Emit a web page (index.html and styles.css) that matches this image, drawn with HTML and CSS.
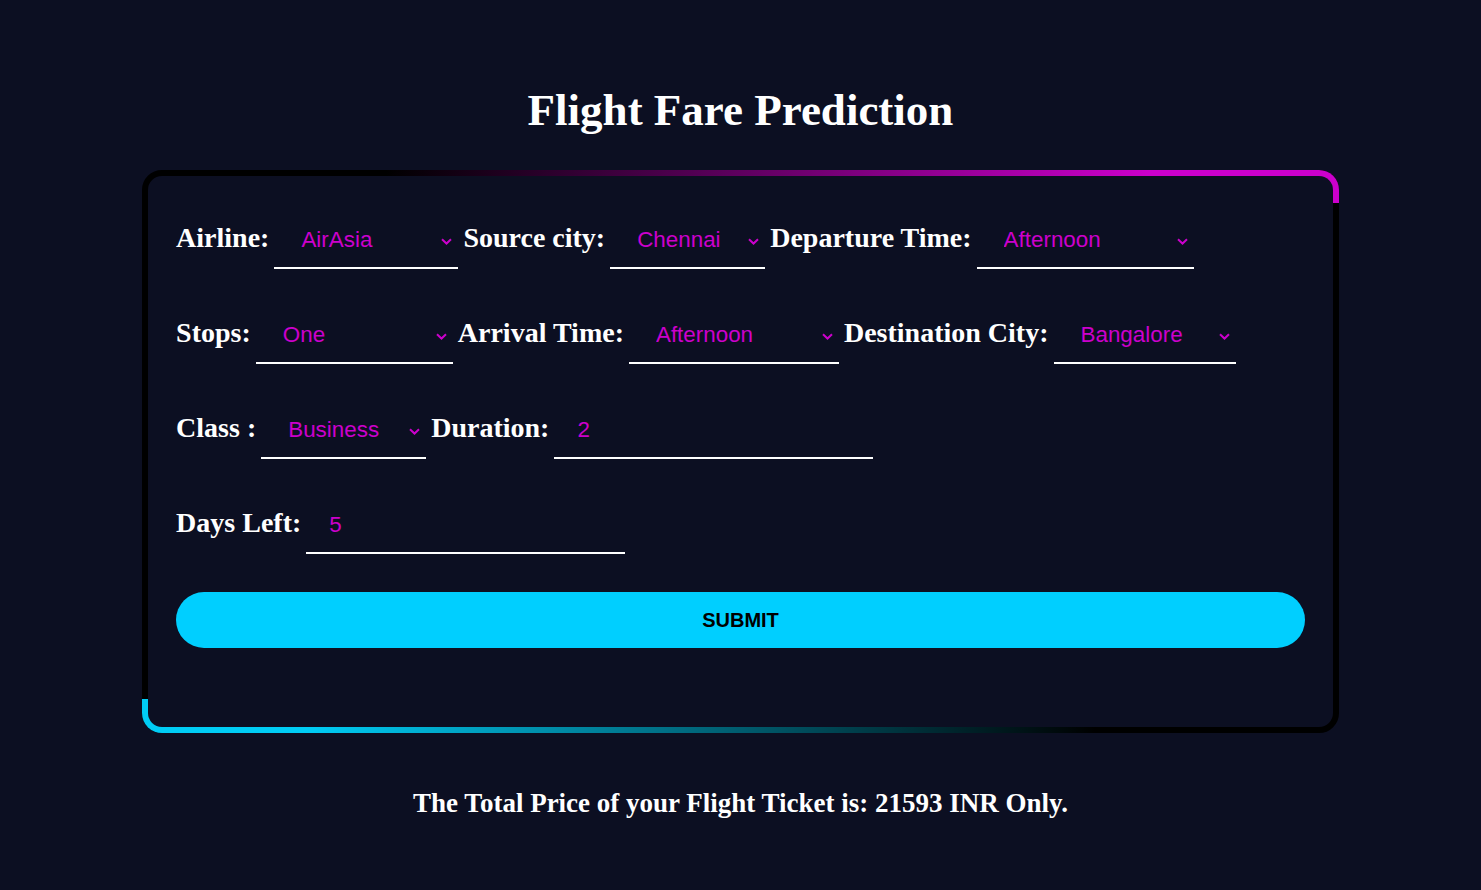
FILE: index.html
```html
<!DOCTYPE html>
<html lang="en">
<head>
<meta charset="utf-8">
<title>Flight Fare Prediction</title>
<link rel="stylesheet" href="styles.css">
</head>
<body>
<main class="page">
  <h1 class="title">Flight Fare Prediction</h1>
  <form class="card">
    <div class="row">
      <label class="label">Airline:</label>
      <div class="field w-184">
        <select class="control"><option>AirAsia</option><option>Vistara</option></select>
        <svg class="chev" width="11" height="7" viewBox="0 0 11 7"><path d="M1 1.2 L5.5 5.5 L10 1.2" fill="none" stroke="#cc00cc" stroke-width="2"/></svg>
      </div>
      <label class="label">Source city:</label>
      <div class="field w-155">
        <select class="control"><option>Chennai</option><option>Delhi</option></select>
        <svg class="chev" width="11" height="7" viewBox="0 0 11 7"><path d="M1 1.2 L5.5 5.5 L10 1.2" fill="none" stroke="#cc00cc" stroke-width="2"/></svg>
      </div>
      <label class="label">Departure Time:</label>
      <div class="field w-217">
        <select class="control"><option>Afternoon</option><option>Morning</option></select>
        <svg class="chev" width="11" height="7" viewBox="0 0 11 7"><path d="M1 1.2 L5.5 5.5 L10 1.2" fill="none" stroke="#cc00cc" stroke-width="2"/></svg>
      </div>
    </div>
    <div class="row">
      <label class="label">Stops:</label>
      <div class="field w-197">
        <select class="control"><option>One</option><option>Zero</option></select>
        <svg class="chev" width="11" height="7" viewBox="0 0 11 7"><path d="M1 1.2 L5.5 5.5 L10 1.2" fill="none" stroke="#cc00cc" stroke-width="2"/></svg>
      </div>
      <label class="label">Arrival Time:</label>
      <div class="field w-210">
        <select class="control"><option>Afternoon</option><option>Night</option></select>
        <svg class="chev" width="11" height="7" viewBox="0 0 11 7"><path d="M1 1.2 L5.5 5.5 L10 1.2" fill="none" stroke="#cc00cc" stroke-width="2"/></svg>
      </div>
      <label class="label">Destination City:</label>
      <div class="field w-182">
        <select class="control"><option>Bangalore</option><option>Mumbai</option></select>
        <svg class="chev" width="11" height="7" viewBox="0 0 11 7"><path d="M1 1.2 L5.5 5.5 L10 1.2" fill="none" stroke="#cc00cc" stroke-width="2"/></svg>
      </div>
    </div>
    <div class="row">
      <label class="label">Class :</label>
      <div class="field w-165">
        <select class="control"><option>Business</option><option>Economy</option></select>
        <svg class="chev" width="11" height="7" viewBox="0 0 11 7"><path d="M1 1.2 L5.5 5.5 L10 1.2" fill="none" stroke="#cc00cc" stroke-width="2"/></svg>
      </div>
      <label class="label">Duration:</label>
      <div class="field field-input w-319">
        <input class="control text" type="text" value="2">
      </div>
    </div>
    <div class="row">
      <label class="label">Days Left:</label>
      <div class="field field-input w-319">
        <input class="control text" type="text" value="5">
      </div>
    </div>
    <button class="submit" type="button">SUBMIT</button>
  </form>
  <h3 class="result">The Total Price of your Flight Ticket is: 21593 INR Only.</h3>
</main>
</body>
</html>
```

FILE: styles.css
```css
html, body {
  margin: 0;
  padding: 0;
  background: #0c0f22;
}

.page {
  display: flex;
  flex-direction: column;
  align-items: center;
  padding-top: 84px;
  font-family: "Liberation Serif", "Times New Roman", serif;
  color: #fff;
}

.title {
  margin: 0 0 34px;
  font-size: 45px;
  line-height: 52px;
  font-weight: bold;
}

.card {
  position: relative;
  box-sizing: border-box;
  width: calc(80% + 12px);
  border: 6px solid #000;
  border-radius: 20px;
  padding: 43px 28px 79px 28px;
  display: flex;
  flex-direction: column;
  gap: 45px;
}

.card::before,
.card::after {
  content: "";
  position: absolute;
  pointer-events: none;
  border: 0 solid transparent;
}

.card::before {
  top: -6px;
  left: 14px;
  right: -6px;
  height: 27px;
  border-top-width: 6px;
  border-right-width: 6px;
  border-radius: 0 20px 0 0;
  background:
    linear-gradient(#0c0f22, #0c0f22) padding-box,
    linear-gradient(90deg, #000 19%, #cc00cc 84%) border-box;
}

.card::after {
  bottom: -6px;
  left: -6px;
  right: 14px;
  height: 28px;
  border-bottom-width: 6px;
  border-left-width: 6px;
  border-radius: 0 0 0 20px;
  background:
    linear-gradient(#0c0f22, #0c0f22) padding-box,
    linear-gradient(90deg, #00ccf5 14%, #000 81%) border-box;
}

.row {
  position: relative;
  z-index: 1;
  display: flex;
  align-items: baseline;
  gap: 5px;
}

.label {
  font-size: 28px;
  font-weight: bold;
  color: #fff;
  white-space: nowrap;
}

.field {
  box-sizing: border-box;
  display: flex;
  align-items: center;
  padding: 8px 6px 14px 0;
  border-bottom: 2px solid #fff;
}

.w-184 { width: 184px; }
.w-155 { width: 155px; }
.w-217 { width: 217px; }
.w-197 { width: 197px; }
.w-210 { width: 210px; }
.w-182 { width: 182px; }
.w-165 { width: 165px; }
.w-319 { width: 319px; }

.control {
  flex: 1;
  min-width: 0;
  appearance: none;
  -webkit-appearance: none;
  background: transparent;
  border: none;
  outline: none;
  margin: 0;
  padding: 0 0 0 27px;
  height: 26px;
  line-height: 26px;
  font-family: "Liberation Sans", Arial, sans-serif;
  font-size: 22.4px;
  color: #cc00cc;
  caret-color: #cc00cc;
}

.control.text {
  padding-left: 23px;
}

.chev {
  flex: none;
  margin-top: 2px;
}

.submit {
  position: relative;
  z-index: 1;
  margin-top: -7px;
  height: 56px;
  border: none;
  border-radius: 28px;
  background: #00cfff;
  color: #000;
  font-family: "Liberation Sans", Arial, sans-serif;
  font-size: 20px;
  font-weight: bold;
  cursor: pointer;
}

.result {
  margin: 55px 0 0;
  font-size: 27px;
  line-height: 31px;
  font-weight: bold;
}
```
